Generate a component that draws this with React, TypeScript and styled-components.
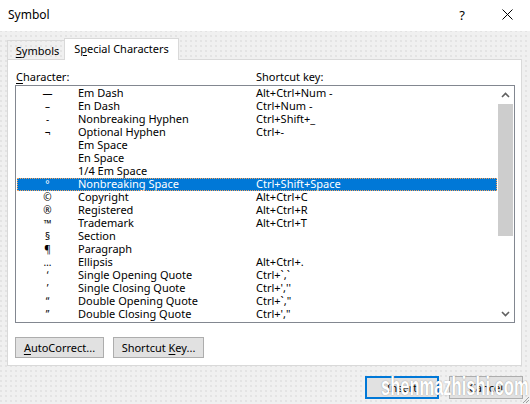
import React from "react";
import styled, { createGlobalStyle } from "styled-components";

const GlobalStyle = createGlobalStyle`
  html, body {
    margin: 0;
    padding: 0;
    background: #f0f0f0;
  }
  body {
    font-family: "Noto Sans", "Liberation Sans", sans-serif;
    font-size: 11px;
    color: #000;
  }
`;

const Window = styled.div`
  position: relative;
  width: 530px;
  height: 404px;
  display: flex;
  flex-direction: column;
  overflow: hidden;
  background-color: #f0f0f0;
  background-image: radial-gradient(circle at 1px 1px, #e3e3e3 0.7px, transparent 1px);
  background-size: 5px 5px;
`;

const TitleBar = styled.div`
  flex: 0 0 30px;
  display: flex;
  align-items: center;
  justify-content: space-between;
  background: #fff;
  padding-left: 8px;
`;

const Title = styled.span`
  font-size: 12px;
  line-height: 30px;
  padding-bottom: 1px;
`;

const Controls = styled.div`
  display: flex;
  height: 30px;
`;

const CaptionButton = styled.div<{ $w: number }>`
  width: ${(p) => p.$w}px;
  height: 30px;
  display: flex;
  align-items: center;
  justify-content: center;
  font-size: 13px;
  padding-bottom: 2px;
  box-sizing: border-box;
`;

const Body = styled.div`
  display: flex;
  flex-direction: column;
  padding: 7px 9px 0 7px;
`;

const TabStrip = styled.div`
  display: flex;
  align-items: flex-start;
  height: 22px;
  margin-bottom: -1px;
  position: relative;
  z-index: 1;
`;

const Tab = styled.div<{ $active?: boolean }>`
  box-sizing: border-box;
  display: flex;
  align-items: center;
  justify-content: center;
  border: 1px solid #d9d9d9;
  border-bottom: none;
  ${(p) =>
    p.$active
      ? `
    width: 115px;
    height: 22px;
    background: #fff;
    padding-bottom: 2px;
  `
      : `
    width: 57px;
    height: 19px;
    margin-top: 2px;
    border-right: none;
    padding-left: 3px;
  `}
`;

const Key = styled.span`
  text-decoration: underline;
  text-underline-offset: 2px;
`;

const Panel = styled.div`
  box-sizing: border-box;
  height: 307px;
  width: 515px;
  background: #fff;
  border: 1px solid #d9d9d9;
  padding: 10px 6px 7px 7px;
  display: flex;
  flex-direction: column;
`;

const Header = styled.div`
  display: grid;
  grid-template-columns: 240px 1fr;
  height: 15px;
  line-height: 14px;
  padding-left: 1px;
`;

const ListBox = styled.div`
  box-sizing: border-box;
  height: 238px;
  border: 1px solid #828790;
  display: flex;
`;

const Rows = styled.div`
  flex: 1;
  padding: 1px 0 0 1px;
`;

const Row = styled.div<{ $selected?: boolean }>`
  height: 13px;
  line-height: 12px;
  display: grid;
  grid-template-columns: 61px 178px 1fr;
  background: ${(p) => (p.$selected ? "#0078d7" : "transparent")};
  color: ${(p) => (p.$selected ? "#fff" : "#000")};
  outline: ${(p) => (p.$selected ? "1px dotted #f6a25a" : "none")};
  outline-offset: -1px;
  white-space: pre;
`;

const Glyph = styled.span`
  text-align: center;
  font-size: 10px;
`;

const ScrollBar = styled.div`
  width: 17px;
  display: flex;
  flex-direction: column;
`;

const ScrollArrow = styled.div`
  height: 17px;
  display: flex;
  align-items: center;
  justify-content: center;
`;

const Thumb = styled.div`
  height: 132px;
  margin: 1px 1px 0 1px;
  background: #cdcdcd;
`;

const Track = styled.div`
  flex: 1;
`;

const ButtonRow = styled.div`
  display: flex;
  gap: 9px;
  margin-top: 14px;
`;

const Button = styled.div<{ $w: number; $h?: number; $default?: boolean }>`
  box-sizing: border-box;
  width: ${(p) => p.$w}px;
  height: ${(p) => p.$h ?? 21}px;
  display: flex;
  align-items: center;
  justify-content: center;
  background: #e1e1e1;
  border: ${(p) => (p.$default ? "2px solid #0078d7" : "1px solid #adadad")};
  padding-bottom: 1px;
`;

const Footer = styled.div`
  display: flex;
  justify-content: flex-end;
  gap: 10px;
  padding: 10px 7px 0 0;
`;

const Watermark = styled.div`
  position: absolute;
  left: 381px;
  top: 372px;
  font-family: "Liberation Sans", Arial, sans-serif;
  font-weight: bold;
  font-size: 25px;
  line-height: 28px;
  color: #fff;
  transform: scaleX(0.66);
  transform-origin: left top;
  text-shadow: 0 0 1.5px rgba(0, 0, 0, 0.4);
  white-space: nowrap;
`;

const Grip = styled.svg`
  position: absolute;
  right: 0;
  bottom: 0;
`;

type Entry = { glyph: string; name: string; keys: string };

const entries: Entry[] = [
  { glyph: "—", name: "Em Dash", keys: "Alt+Ctrl+Num -" },
  { glyph: "–", name: "En Dash", keys: "Ctrl+Num -" },
  { glyph: "-", name: "Nonbreaking Hyphen", keys: "Ctrl+Shift+_" },
  { glyph: "¬", name: "Optional Hyphen", keys: "Ctrl+-" },
  { glyph: "", name: "Em Space", keys: "" },
  { glyph: "", name: "En Space", keys: "" },
  { glyph: "", name: "1/4 Em Space", keys: "" },
  { glyph: "°", name: "Nonbreaking Space", keys: "Ctrl+Shift+Space" },
  { glyph: "©", name: "Copyright", keys: "Alt+Ctrl+C" },
  { glyph: "®", name: "Registered", keys: "Alt+Ctrl+R" },
  { glyph: "™", name: "Trademark", keys: "Alt+Ctrl+T" },
  { glyph: "§", name: "Section", keys: "" },
  { glyph: "¶", name: "Paragraph", keys: "" },
  { glyph: "…", name: "Ellipsis", keys: "Alt+Ctrl+." },
  { glyph: "‘", name: "Single Opening Quote", keys: "Ctrl+`,`" },
  { glyph: "’", name: "Single Closing Quote", keys: "Ctrl+',''" },
  { glyph: "“", name: "Double Opening Quote", keys: "Ctrl+`,\"" },
  { glyph: "”", name: "Double Closing Quote", keys: "Ctrl+',\"" },
];

const Chevron = ({ up }: { up?: boolean }) => (
  <svg width="9" height="6" viewBox="0 0 9 6">
    <polyline
      points={up ? "1,5 4.5,1.5 8,5" : "1,1 4.5,4.5 8,1"}
      fill="none"
      stroke="#606060"
      strokeWidth="1.6"
    />
  </svg>
);

export default function App() {
  return (
    <>
      <GlobalStyle />
      <Window>
        <TitleBar>
          <Title>Symbol</Title>
          <Controls>
            <CaptionButton $w={44}>?</CaptionButton>
            <CaptionButton $w={46}>
              <svg width="11" height="11" viewBox="0 0 11 11">
                <path d="M0.5 0.5 L10.5 10.5 M10.5 0.5 L0.5 10.5" stroke="#000" strokeWidth="1" />
              </svg>
            </CaptionButton>
          </Controls>
        </TitleBar>
        <Body>
          <TabStrip>
            <Tab>
              <span>
                <Key>S</Key>ymbols
              </span>
            </Tab>
            <Tab $active>
              <span>
                S<Key>p</Key>ecial Characters
              </span>
            </Tab>
          </TabStrip>
          <Panel>
            <Header>
              <span>
                <Key>C</Key>haracter:
              </span>
              <span>Shortcut key:</span>
            </Header>
            <ListBox>
              <Rows>
                {entries.map((e, i) => (
                  <Row key={e.name} $selected={i === 7}>
                    <Glyph>{e.glyph}</Glyph>
                    <span>{e.name}</span>
                    <span>{e.keys}</span>
                  </Row>
                ))}
              </Rows>
              <ScrollBar>
                <ScrollArrow>
                  <Chevron up />
                </ScrollArrow>
                <Thumb />
                <Track />
                <ScrollArrow>
                  <Chevron />
                </ScrollArrow>
              </ScrollBar>
            </ListBox>
            <ButtonRow>
              <Button $w={89}>
                <span>
                  <Key>A</Key>utoCorrect...
                </span>
              </Button>
              <Button $w={91}>
                <span>
                  Shortcut <Key>K</Key>ey...
                </span>
              </Button>
            </ButtonRow>
          </Panel>
        </Body>
        <Footer>
          <Button $w={74} $h={23} $default>
            Insert
          </Button>
          <Button $w={74} $h={23}>
            Cancel
          </Button>
        </Footer>
        <Watermark>shenmazhishi.com</Watermark>
        <Grip width="10" height="10" viewBox="0 0 10 10">
          <path d="M9 3 L3 9 M9 6 L6 9" stroke="#a0a0a0" strokeWidth="1" />
        </Grip>
      </Window>
    </>
  );
}
